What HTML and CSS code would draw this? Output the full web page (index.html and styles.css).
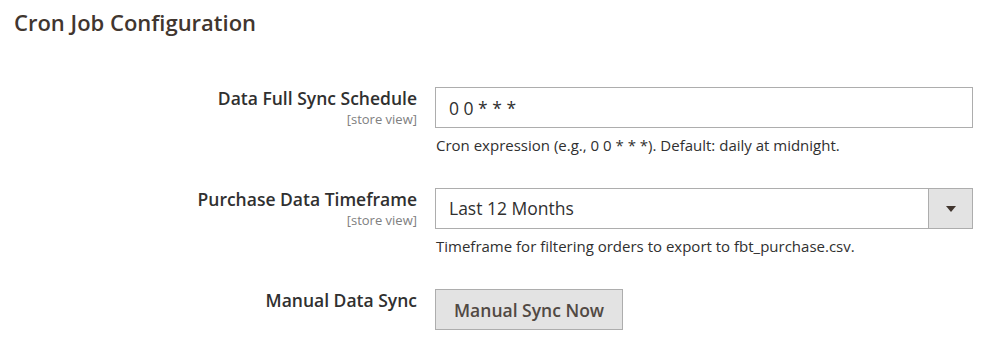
FILE: index.html
```html
<!DOCTYPE html>
<html lang="en">
<head>
  <meta charset="UTF-8">
  <title>Cron Job Configuration</title>
  <link rel="stylesheet" href="styles.css">
</head>
<body>
  <div class="page">
    <h2 class="section-title">Cron Job Configuration</h2>

    <div class="config-rows">
      <!-- Data full sync -->
      <div class="field-label">
        <span class="label-text">Data Full Sync Schedule</span>
        <span class="scope">[store view]</span>
      </div>
      <div class="field-control">
        <input class="text-input" type="text" value="0 0 * * *">
        <p class="note">Cron expression (e.g., 0 0 * * *). Default: daily at midnight.</p>
      </div>

      <!-- Purchase timeframe -->
      <div class="field-label">
        <span class="label-text">Purchase Data Timeframe</span>
        <span class="scope">[store view]</span>
      </div>
      <div class="field-control">
        <div class="select-box">
          <span class="select-value">Last 12 Months</span>
          <span class="select-arrow"><span class="caret"></span></span>
        </div>
        <p class="note">Timeframe for filtering orders to export to fbt_purchase.csv.</p>
      </div>

      <!-- Manual sync -->
      <div class="field-label">
        <span class="label-text">Manual Data Sync</span>
      </div>
      <div class="field-control last">
        <button class="btn" type="button">Manual Sync Now</button>
      </div>
    </div>
  </div>
</body>
</html>
```

FILE: styles.css
```css
body {
  margin: 0;
  font-family: 'Open Sans', 'Liberation Sans', sans-serif;
  color: #303030;
  background-color: #fff;
}

.page {
  padding: 7px 14px 0;
}

.section-title {
  margin: 0;
  font-size: 22px;
  font-weight: 600;
  line-height: 30px;
  color: #41362f;
}

.config-rows {
  display: grid;
  grid-template-columns: 403px 538px;
  column-gap: 18px;
  margin-top: 50px;
}

.field-label {
  display: flex;
  flex-direction: column;
  align-items: flex-end;
  margin-top: -1px;
  text-align: right;
}

.label-text {
  font-size: 17.5px;
  font-weight: 600;
  line-height: 24px;
  color: #303030;
}

.scope {
  font-size: 13px;
  line-height: 18px;
  color: #808080;
}

.field-control {
  margin-bottom: 33px;
}

.field-control.last {
  margin-bottom: 0;
}

.text-input {
  box-sizing: border-box;
  display: block;
  width: 100%;
  height: 41px;
  margin: 0;
  padding: 0 13px;
  border: 1px solid #adadad;
  border-radius: 0;
  font-family: inherit;
  font-size: 17.5px;
  color: #303030;
  outline: none;
}

.select-box {
  box-sizing: border-box;
  display: flex;
  height: 41px;
  border: 1px solid #adadad;
}

.select-value {
  flex: 1;
  padding-left: 13px;
  font-size: 17.5px;
  line-height: 39px;
  color: #303030;
}

.select-arrow {
  display: flex;
  align-items: center;
  justify-content: center;
  width: 43px;
  border-left: 1px solid #adadad;
  background-color: #e3e3e3;
}

.caret {
  width: 0;
  height: 0;
  border-left: 5px solid transparent;
  border-right: 5px solid transparent;
  border-top: 6px solid #41362f;
}

.note {
  margin: 7px 0 0 1px;
  font-size: 15px;
  line-height: 20px;
  color: #303030;
}

.btn {
  box-sizing: border-box;
  height: 41px;
  padding: 0 18px;
  border: 1px solid #adadad;
  border-radius: 0;
  background-color: #e3e3e3;
  font-family: inherit;
  font-size: 17.5px;
  font-weight: 600;
  color: #514943;
  cursor: pointer;
}

.btn:hover {
  background-color: #dbdbdb;
}
```
